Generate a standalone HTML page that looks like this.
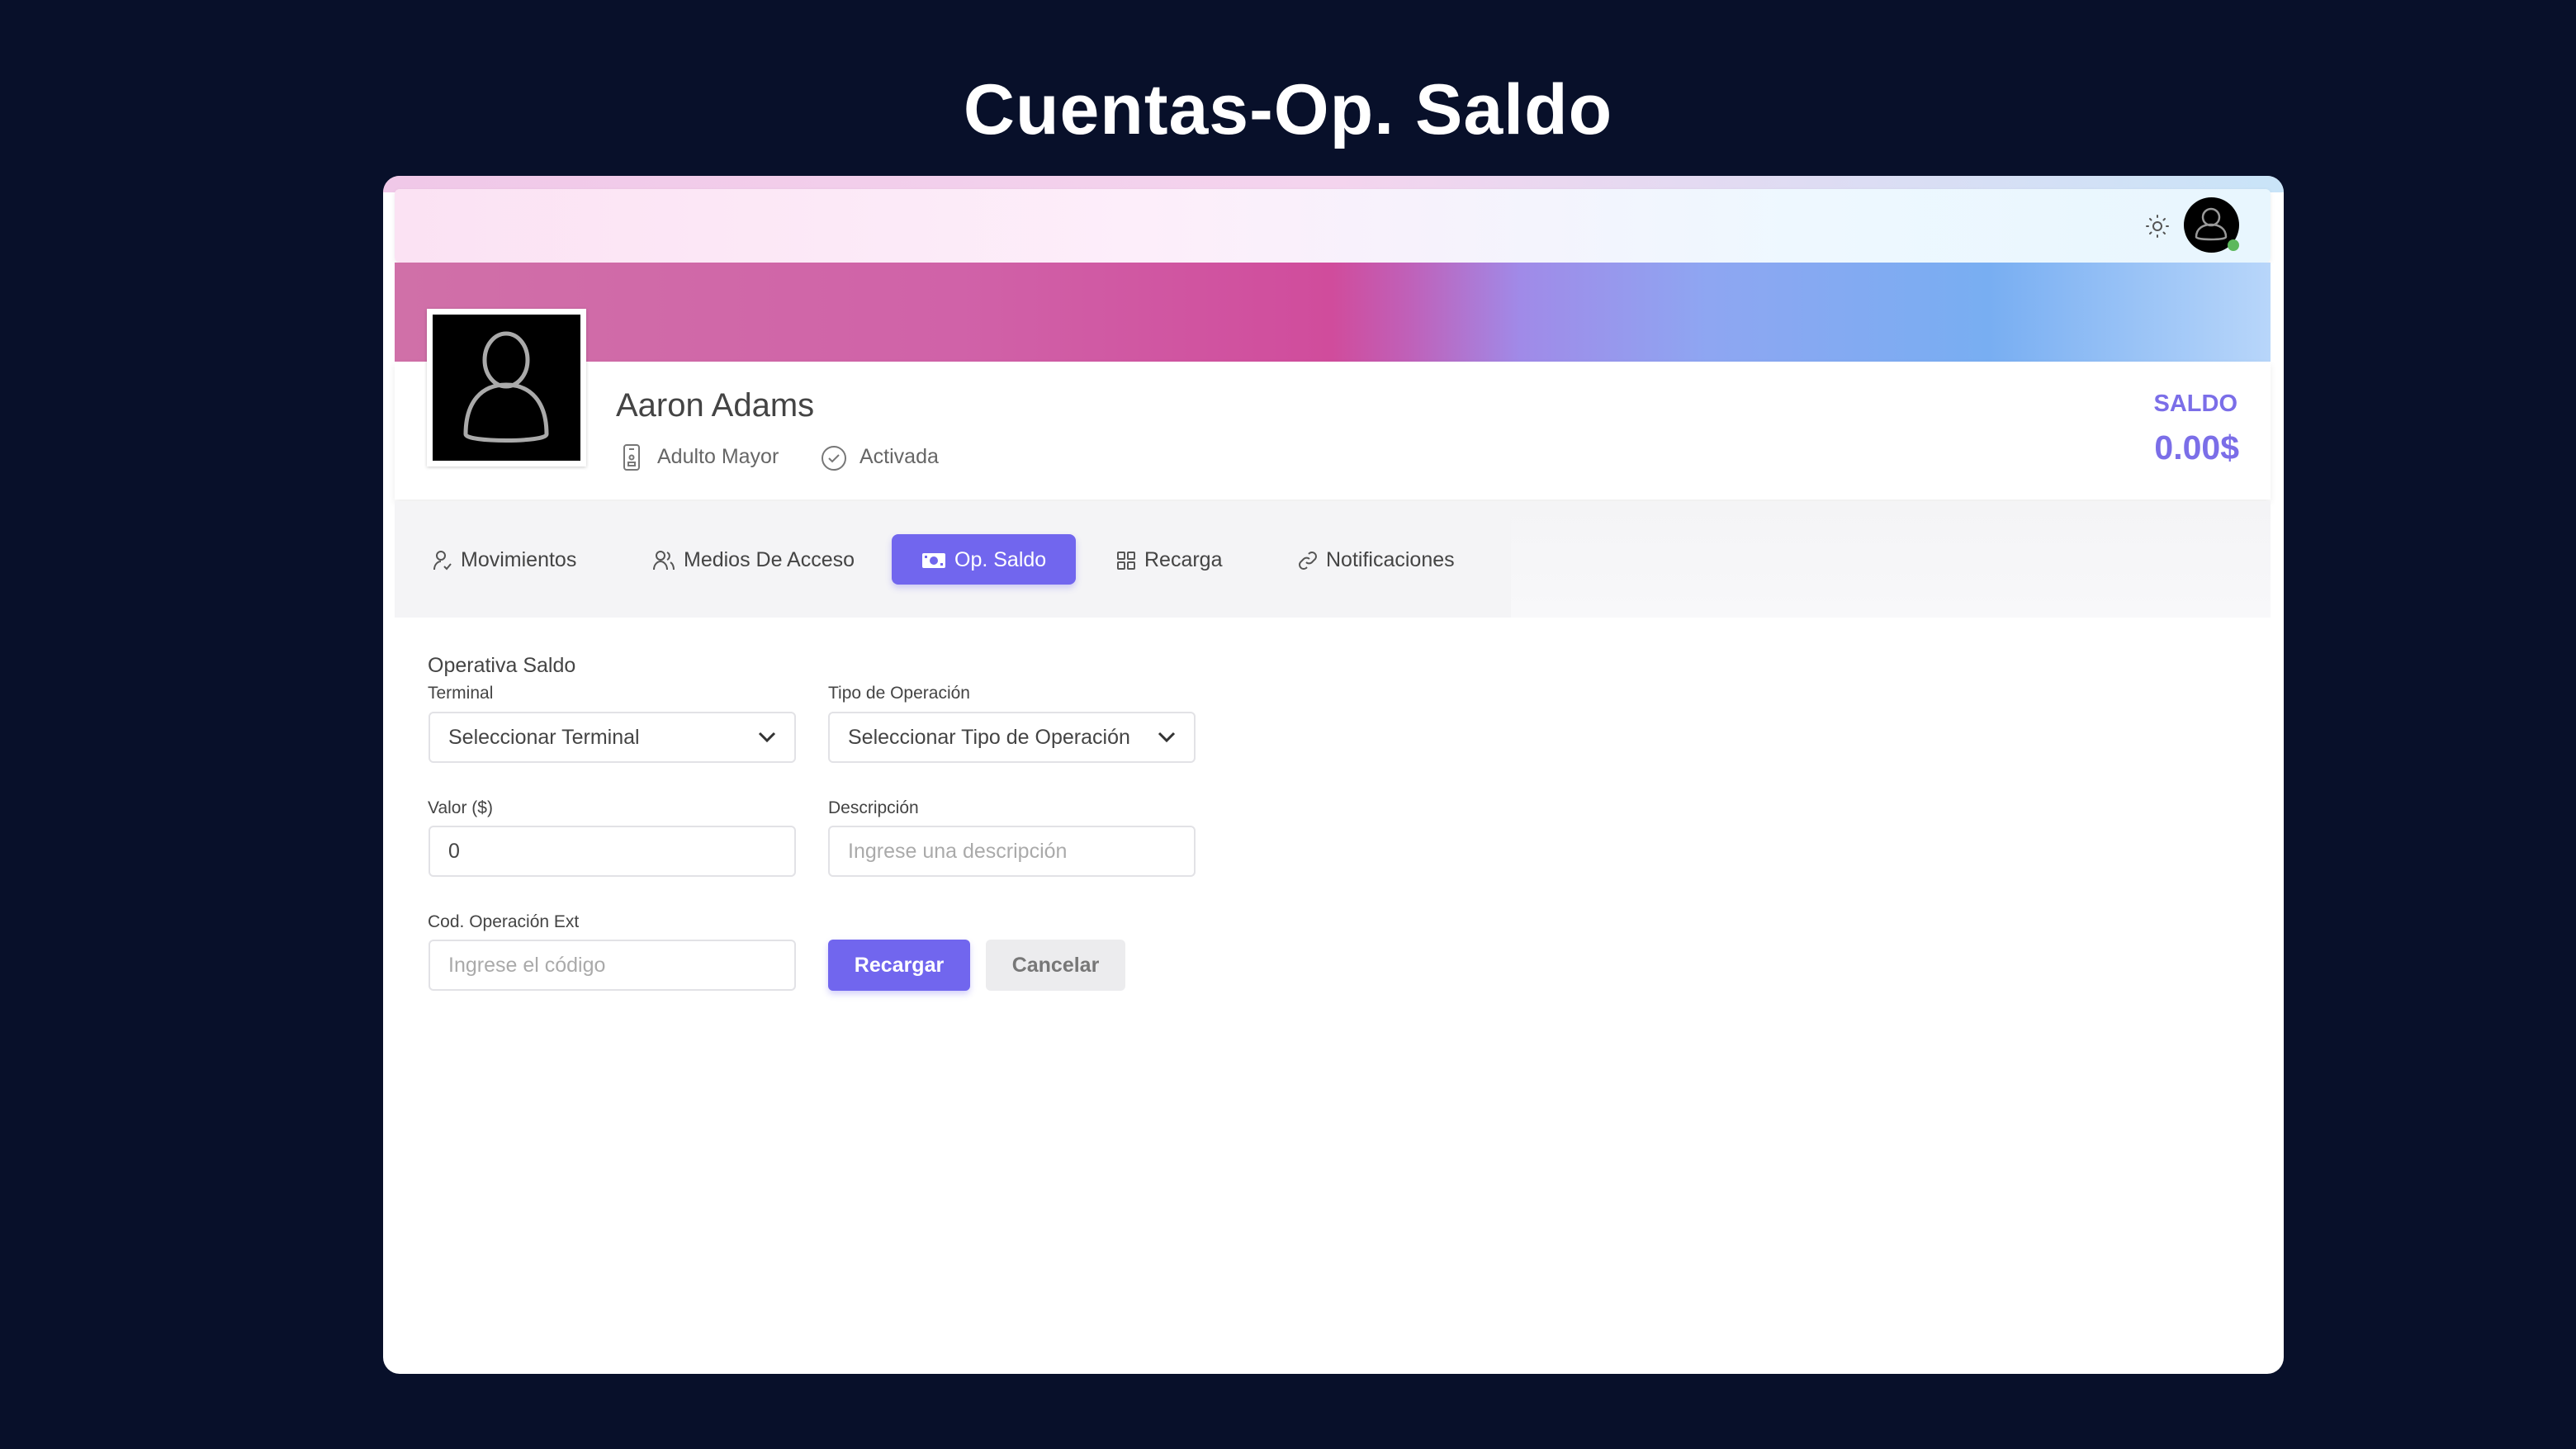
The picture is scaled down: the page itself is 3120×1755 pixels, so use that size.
<!DOCTYPE html>
<html><head><meta charset="utf-8"><style>
*{box-sizing:border-box;margin:0;padding:0}
body{width:3120px;height:1755px;background:#08102a;font-family:"Liberation Sans",sans-serif;position:relative;overflow:hidden}
.title{position:absolute;left:0;width:3120px;top:84px;text-align:center;color:#fff;font-weight:bold;font-size:86px;letter-spacing:1px}
.win{position:absolute;left:464px;top:213px;width:2302px;height:1451px;background:#fff;border-radius:20px;overflow:hidden}
.hdr{position:absolute;left:14px;top:16px;width:2272px;height:89px;background:linear-gradient(90deg,#fbe2f3 0%,#fdeefa 40%,#eef8ff 75%,#e8f6fe 100%);border-radius:6px;box-shadow:0 2px 6px rgba(0,0,0,.08)}
.topband{position:absolute;left:0;top:0;width:2302px;height:20px;background:linear-gradient(90deg,#f0c8e8,#f4d4ee 50%,#c9e4f8)}
.banner{position:absolute;left:14px;top:105px;width:2272px;height:120px;background:linear-gradient(90deg,#d070a8 0%,#d062a8 30%,#d04c9c 50%,#c060b8 54%,#a08ae8 60%,#8ea6f2 70%,#78aef2 85%,#b8d6fa 100%)}
.card{position:absolute;left:14px;top:225px;width:2272px;height:167px;background:#fff;box-shadow:0 4px 8px rgba(0,0,0,.08)}
.av{position:absolute;left:53px;top:161px;width:193px;height:191px;background:#000;border:7px solid #fff;box-shadow:0 1px 4px rgba(0,0,0,.2)}
.name{position:absolute;left:282px;top:256px;font-size:40px;color:#444}
.chip{position:absolute;top:326px;font-size:25px;color:#666}
.saldo{position:absolute;right:56px;top:260px;font-size:29px;font-weight:bold;color:#7b6ee8}
.amt{position:absolute;right:54px;top:306px;font-size:41px;font-weight:bold;color:#7b6ee8}
.tabs{position:absolute;left:14px;top:394px;width:1352px;height:141px;background:#f4f4f6}
.tabs2{position:absolute;left:1366px;top:394px;width:920px;height:141px;background:linear-gradient(180deg,#f4f4f6,#f8f8fa)}
.tab{position:absolute;top:451px;font-size:25px;color:#444;display:flex;align-items:center;gap:10px}
.act{position:absolute;left:616px;top:434px;width:223px;height:61px;background:#7166ee;border-radius:8px;box-shadow:0 4px 8px rgba(113,102,238,.3)}
.lbl{position:absolute;font-size:21px;color:#444}
.inp{position:absolute;width:445px;height:62px;border:2px solid #e2e2e6;border-radius:6px;font-size:25px;color:#444;padding:0 22px;display:flex;align-items:center;justify-content:space-between;background:#fff}
.ph{color:#aaa}
</style></head><body>
<div class="title">Cuentas-Op. Saldo</div>
<div class="win">
 <div class="topband"></div>
 <div class="hdr">
  <svg style="position:absolute;left:2120px;top:30px" width="30" height="30" viewBox="0 0 30 30" fill="none" stroke="#555" stroke-width="2"><circle cx="15" cy="15" r="5"/><g stroke-linecap="round"><path d="M15 2v2M15 26v2M2 15h2M26 15h2M6 6l1.5 1.5M22.5 22.5L24 24M6 24l1.5-1.5M22.5 7.5L24 6"/></g></svg>
  <div style="position:absolute;left:2167px;top:10px;width:67px;height:67px;border-radius:50%;background:#000">
   <svg width="67" height="67" viewBox="0 0 67 67" fill="none" stroke="#999" stroke-width="2.5"><circle cx="33" cy="24" r="10"/><path d="M15 48c0-10 8-15 18-15s18 5 18 15c0 4-36 4-36 0z"/></svg>
   <div style="position:absolute;right:0;bottom:2px;width:14px;height:14px;border-radius:50%;background:#5cb85c"></div>
  </div>
 </div>
 <div class="banner"></div>
 <div class="card"></div>
 <div class="av"><svg width="179" height="177" viewBox="0 0 179 177" fill="none" stroke="#aaa" stroke-width="5"><ellipse cx="89" cy="55" rx="26" ry="32"/><path d="M40 145c0-40 20-60 49-60s49 20 49 60c0 10-98 10-98 0z"/></svg></div>
 <div class="name">Aaron Adams</div>
 <svg style="position:absolute;left:290px;top:324px" width="22" height="34" viewBox="0 0 22 34" fill="none" stroke="#777" stroke-width="2"><rect x="2" y="2" width="18" height="30" rx="3"/><path d="M8 7h6"/><circle cx="11" cy="17" r="2.5"/><rect x="7" y="23" width="8" height="4"/></svg>
 <div class="chip" style="left:332px">Adulto Mayor</div>
 <svg style="position:absolute;left:530px;top:326px" width="32" height="32" viewBox="0 0 32 32" fill="none" stroke="#777" stroke-width="2"><circle cx="16" cy="16" r="14"/><path d="M10 16l4 4 8-8"/></svg>
 <div class="chip" style="left:577px">Activada</div>
 <div class="saldo">SALDO</div>
 <div class="amt">0.00$</div>
 <div class="tabs"></div><div class="tabs2"></div>
 <div class="act"></div>
 <div class="tab" style="left:60px"><svg width="24" height="26" viewBox="0 0 24 26" fill="none" stroke="#555" stroke-width="2"><circle cx="10" cy="7" r="5"/><path d="M2 24c0-6 4-10 8-10M14 20l3 3 5-6"/></svg>Movimientos</div>
 <div class="tab" style="left:326px"><svg width="28" height="26" viewBox="0 0 28 26" fill="none" stroke="#555" stroke-width="2"><circle cx="10" cy="7" r="5"/><path d="M2 24c0-6 4-10 8-10s8 4 8 10M18 3a5 5 0 0 1 0 9M22 15c3 2 4 5 4 9"/></svg>Medios De Acceso</div>
 <div class="tab" style="left:652px;color:#fff"><svg width="30" height="24" viewBox="0 0 30 24" fill="#fff"><rect x="1" y="3" width="28" height="18" rx="2"/><circle cx="15" cy="12" r="5" fill="#7166ee"/><rect x="4" y="6" width="3" height="3" fill="#7166ee"/><rect x="23" y="15" width="3" height="3" fill="#7166ee"/></svg>Op. Saldo</div>
 <div class="tab" style="left:888px"><svg width="24" height="24" viewBox="0 0 24 24" fill="none" stroke="#555" stroke-width="2"><rect x="2" y="2" width="8" height="8" rx="1"/><rect x="14" y="2" width="8" height="8" rx="1"/><rect x="2" y="14" width="8" height="8" rx="1"/><rect x="14" y="14" width="8" height="8" rx="1"/></svg>Recarga</div>
 <div class="tab" style="left:1108px"><svg width="24" height="24" viewBox="0 0 24 24" fill="none" stroke="#555" stroke-width="2"><path d="M10 14a5 5 0 0 0 7 0l4-4a5 5 0 0 0-7-7l-1 1M14 10a5 5 0 0 0-7 0l-4 4a5 5 0 0 0 7 7l1-1"/></svg>Notificaciones</div>

 <div class="lbl" style="left:54px;top:579px;font-size:25px">Operativa Saldo</div>
 <div class="lbl" style="left:54px;top:615px">Terminal</div>
 <div class="lbl" style="left:539px;top:615px">Tipo de Operación</div>
 <div class="inp" style="left:55px;top:649px">Seleccionar Terminal<svg width="22" height="14" viewBox="0 0 22 14" fill="none" stroke="#333" stroke-width="3"><path d="M2 2l9 9 9-9"/></svg></div>
 <div class="inp" style="left:539px;top:649px">Seleccionar Tipo de Operación<svg width="22" height="14" viewBox="0 0 22 14" fill="none" stroke="#333" stroke-width="3"><path d="M2 2l9 9 9-9"/></svg></div>
 <div class="lbl" style="left:54px;top:754px">Valor ($)</div>
 <div class="lbl" style="left:539px;top:754px">Descripción</div>
 <div class="inp" style="left:55px;top:787px">0</div>
 <div class="inp" style="left:539px;top:787px"><span class="ph">Ingrese una descripción</span></div>
 <div class="lbl" style="left:54px;top:892px">Cod. Operación Ext</div>
 <div class="inp" style="left:55px;top:925px"><span class="ph">Ingrese el código</span></div>
 <div style="position:absolute;left:539px;top:925px;width:172px;height:62px;background:#7166ee;border-radius:6px;color:#fff;font-size:25px;font-weight:bold;display:flex;align-items:center;justify-content:center;box-shadow:0 4px 8px rgba(113,102,238,.3)">Recargar</div>
 <div style="position:absolute;left:730px;top:925px;width:169px;height:62px;background:#ececee;border-radius:6px;color:#777;font-size:25px;font-weight:bold;display:flex;align-items:center;justify-content:center">Cancelar</div>
</div>
</body></html>
